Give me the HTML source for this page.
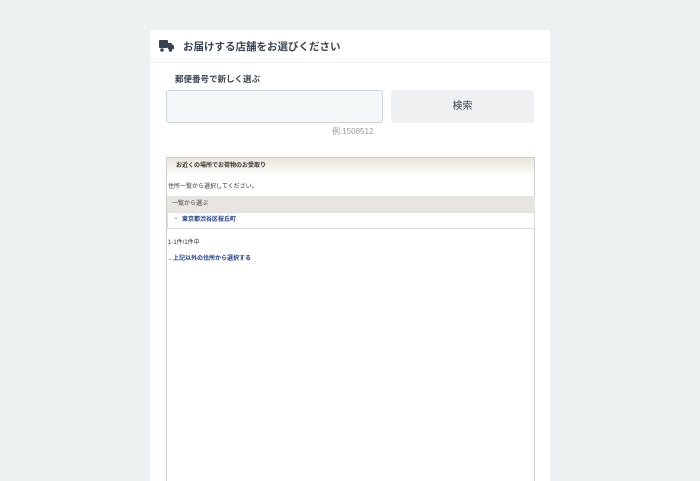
<!DOCTYPE html>
<html><head><meta charset="utf-8"><style>
*{margin:0;padding:0;box-sizing:border-box}
html,body{width:700px;height:481px;overflow:hidden}
body{background:#eef1f2;font-family:"Liberation Sans","Noto Sans CJK JP",sans-serif;position:relative}
.card{position:absolute;left:150px;top:30px;width:400px;height:451px;background:#fff;overflow:hidden}
.hd{height:33px;border-bottom:1px solid #eef0f1;position:relative}
.hd .t{position:absolute;left:33px;top:9px;font-size:10.5px;font-weight:bold;color:#3a4450}
.lbl{position:absolute;left:25px;top:43px;font-size:8.5px;font-weight:bold;color:#3a4450}
.inp{position:absolute;left:16px;top:60px;width:217px;height:33px;background:#f4f7f8;border:1px solid #cdd5da;border-radius:3px}
.btn{position:absolute;left:241px;top:60px;width:143px;height:33px;background:#eef0f1;border-radius:3px;text-align:center;line-height:33px;font-size:10px;color:#3a4450}
.ex{position:absolute;left:182px;top:96px;font-size:8px;color:#999}
.fr{position:absolute;left:16px;top:127px;width:369px;height:340px;border:1px solid #ccc;font-size:6px;color:#333}
.fh{height:16px;background:linear-gradient(#ece6dc,#fbfaf8);padding-left:9px;line-height:16px;font-weight:bold;font-size:6px}
.p{position:absolute;left:1px;top:23px}
.g{position:absolute;left:0;top:38px;width:368px;height:17px;background:#e8e5e0;line-height:17px;padding-left:5px;border-bottom:1px solid #ddd}
.r{position:absolute;left:0;top:55px;width:368px;height:16px;border:1px solid #ddd;border-top:none;line-height:15px;padding-left:5px;color:#1a3d8f;font-weight:bold}
.r span{color:#4aa;margin-right:3px}
.c{position:absolute;left:1px;top:79px}
.l{position:absolute;left:0;top:95px;color:#1a3d8f;font-weight:bold}
</style></head><body>
<div class="card">
<div class="hd"><svg style="position:absolute;left:9px;top:10px" width="15" height="12" viewBox="0 0 15 12"><rect x="0" y="0" width="9" height="8" rx="1" fill="#3a4450"/><path d="M9 3h3l3 3v3H9z" fill="#3a4450"/><circle cx="3" cy="10" r="1.8" fill="#3a4450"/><circle cx="11.5" cy="10" r="1.8" fill="#3a4450"/></svg><div class="t">お届けする店舗をお選びください</div></div>
<div class="lbl">郵便番号で新しく選ぶ</div>
<div class="inp"></div>
<div class="btn">検索</div>
<div class="ex">例:1508512</div>
<div class="fr">
<div class="fh">お近くの場所でお荷物のお受取り</div>
<div class="p">住所一覧から選択してください。</div>
<div class="g">一覧から選ぶ</div>
<div class="r"><span>・</span>東京都渋谷区桜丘町</div>
<div class="c">1-1件/1件中</div>
<div class="l">→上記以外の住所から選択する</div>
</div>
</div>
</body></html>
